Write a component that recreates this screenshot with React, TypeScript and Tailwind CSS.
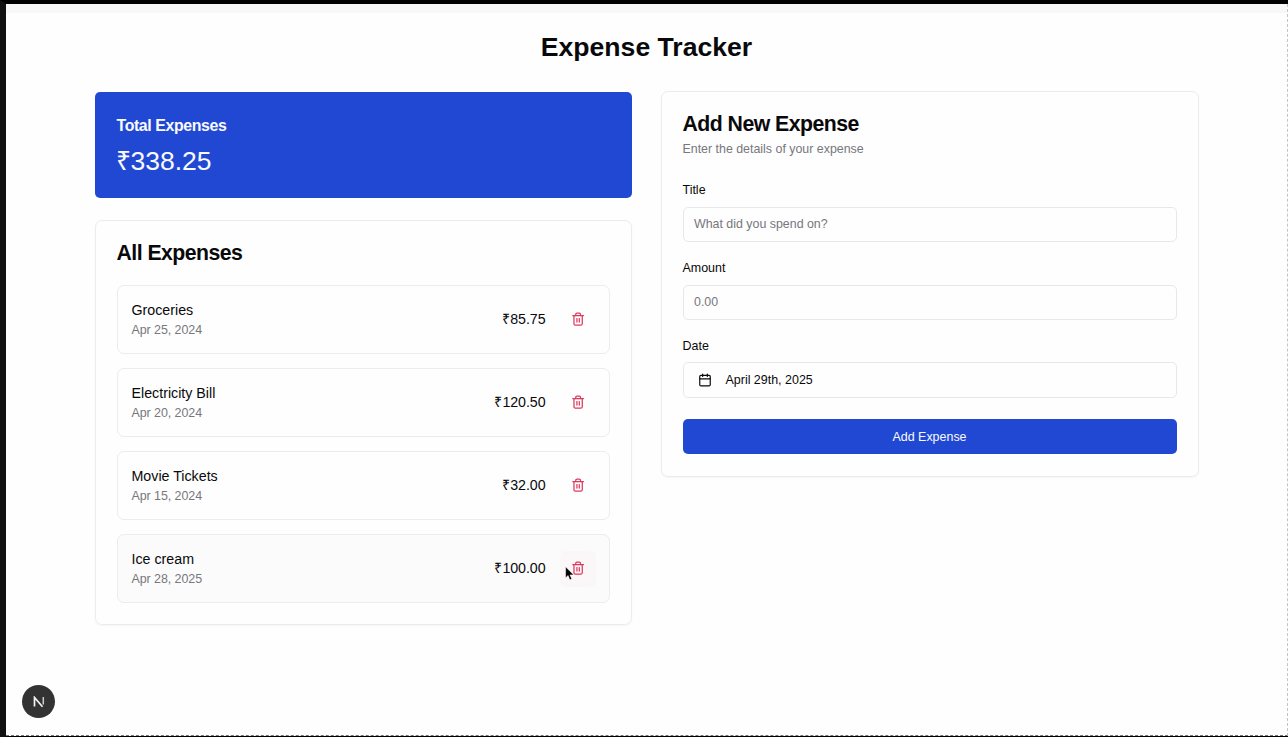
import { Calendar } from "lucide-react";

type Expense = { title: string; date: string; amount: string; hovered?: boolean };

const expenses: Expense[] = [
  { title: "Groceries", date: "Apr 25, 2024", amount: "₹85.75" },
  { title: "Electricity Bill", date: "Apr 20, 2024", amount: "₹120.50" },
  { title: "Movie Tickets", date: "Apr 15, 2024", amount: "₹32.00" },
  { title: "Ice cream", date: "Apr 28, 2025", amount: "₹100.00", hovered: true },
];

function TrashIcon() {
  return (
    <svg className="ml-px size-[14.24px]" viewBox="0 0 24 24" fill="none" stroke="currentColor" strokeWidth="2.1" strokeLinecap="round" strokeLinejoin="round">
      <path d="M3 6h18" />
      <path d="M19 6v14c0 1-1 2-2 2H7c-1 0-2-1-2-2V6" />
      <path d="M8 6V4c0-1 1-2 2-2h4c1 0 2 1 2 2v2" />
      <path d="M10 11v6" />
      <path d="M14 11v6" />
    </svg>
  );
}

function Pointer() {
  return (
    <svg className="absolute left-[5px] top-[15px] h-[15px] w-[10px]" viewBox="0 0 10 15">
      <path d="M.6.8v11l2.5-2.3 1.7 4.3 2-.8L5 8.9h3.7z" fill="#000" stroke="#fff" strokeWidth=".5" />
    </svg>
  );
}

function ExpenseRow({ expense }: { expense: Expense }) {
  return (
    <li className={`flex h-[69px] items-center justify-between rounded-[7px] border border-[#ececee] pl-[14px] pr-[13px] ${expense.hovered ? "bg-[#fbfbfb]" : "bg-[#fefefe]"}`}>
      <div>
        <h3 className="pb-px text-[14.24px] leading-[19px]">{expense.title}</h3>
        <p className="text-[12.46px] leading-[18px] tracking-[-0.005em] text-[#77777c]">{expense.date}</p>
      </div>
      <div className="flex items-center gap-[14px]">
        <span className="pb-[2px] text-[14.24px] leading-[20px] tracking-[-0.005em]">{expense.amount}</span>
        <button className={`relative flex size-[36px] items-center justify-center rounded-md text-[#dc3a5e] ${expense.hovered ? "bg-[#fbf7f8]" : ""}`} aria-label="Delete expense">
          <TrashIcon />
          {expense.hovered && <Pointer />}
        </button>
      </div>
    </li>
  );
}

function Field({ label, placeholder }: { label: string; placeholder: string }) {
  return (
    <label className="block">
      <span className="block text-[12.46px] leading-[18px]">{label}</span>
      <input className="mt-[8px] block h-[35px] w-full rounded-[5px] border border-[#e8e8ea] bg-[#fefefe] px-[10.5px] pb-px text-[12.4px] placeholder:text-[#77777c]" placeholder={placeholder} />
    </label>
  );
}

export default function App() {
  return (
    <div className="h-[737px] w-[1288px] overflow-hidden bg-black font-['Liberation_Sans',Arial,sans-serif] text-[#09090b]">
      <div className="flex h-full border-l-[6px] border-t-4 border-l-[#111111] border-t-black pb-px">
        <div className="relative flex-1 border-b border-r border-dashed border-b-[#777] border-r-[#c4c4c4] bg-[#fefefe]">
          <div className="absolute inset-x-0 top-0 h-[9px] bg-[#f8f8f8]" />
          <main className="relative mx-auto w-[1104px] pt-[27px]">
            <h1 className="text-center text-[26.6px] font-bold leading-[32px]">Expense Tracker</h1>
            <div className="mt-[28px] grid grid-cols-[537px_538px] items-start gap-[29px]">
              <div>
                <section className="mt-[1px] h-[106px] rounded-[5px] bg-[#2148d3] px-[22px] pt-[24px] text-[#f8fafc]">
                  <h2 className="text-[15.9px] font-bold leading-[20px] tracking-tight">Total Expenses</h2>
                  <p className="-ml-px mt-[9px] text-[26.5px] leading-[32px]">₹338.25</p>
                </section>
                <section className="mt-[22px] h-[405px] rounded-[7px] border border-[#ececee] px-[21px] pt-[20px] shadow-[0_1px_2px_rgba(0,0,0,0.04)]">
                  <h2 className="text-[21.25px] font-bold leading-[24px] tracking-tight">All Expenses</h2>
                  <ul className="mt-[20px] flex flex-col gap-[14px]">
                    {expenses.map((expense) => (
                      <ExpenseRow key={expense.title} expense={expense} />
                    ))}
                  </ul>
                </section>
              </div>
              <section className="h-[386px] rounded-[7px] border border-[#ececee] px-[21px] pt-[20px] shadow-[0_1px_2px_rgba(0,0,0,0.04)]">
                <h2 className="text-[21.25px] font-bold leading-[24px] tracking-tight">Add New Expense</h2>
                <p className="mt-[4px] text-[12.4px] leading-[18px] text-[#77777c]">Enter the details of your expense</p>
                <form className="mt-[23px] flex flex-col">
                  <Field label="Title" placeholder="What did you spend on?" />
                  <div className="mt-[17px]">
                    <Field label="Amount" placeholder="0.00" />
                  </div>
                  <div className="mt-[17px]">
                    <span className="block text-[12.46px] leading-[18px]">Date</span>
                    <button type="button" className="mt-[7px] flex h-[36px] w-full items-center gap-[14px] rounded-[5px] border border-[#e8e8ea] bg-[#fefefe] px-[14px] text-[12.46px]">
                      <Calendar className="size-[14px]" />
                      April 29th, 2025
                    </button>
                  </div>
                  <button type="button" className="mt-[21px] h-[35px] w-full rounded-[5px] bg-[#2148d3] pt-px text-[12.46px] text-[#f8fafc]">Add Expense</button>
                </form>
              </section>
            </div>
          </main>
          <div className="absolute bottom-[17px] left-[16px] flex size-[33px] items-center justify-center rounded-full bg-[#333333]">
            <svg className="h-[12px] w-[12px]" viewBox="0 0 12 12" fill="none">
              <path d="M1.5 10.5V1.5l8 9.2" stroke="#f4f4f4" strokeWidth="1.7" />
              <path d="M10.3 1v7.5" stroke="#cccccc" strokeWidth="1.5" />
            </svg>
          </div>
        </div>
      </div>
    </div>
  );
}
